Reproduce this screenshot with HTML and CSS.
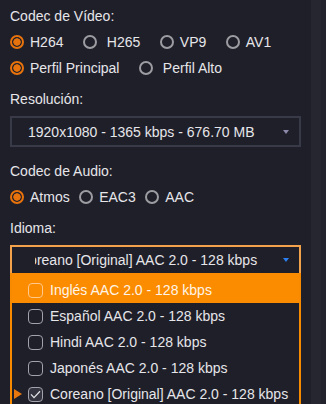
FILE: index.html
```html
<!DOCTYPE html>
<html lang="es">
<head>
    <meta charset="UTF-8">
    <meta name="viewport" content="width=device-width, initial-scale=1.0">
    <title>Opciones de descarga</title>

    <link rel="stylesheet" href="styles.css">
</head>
<body>
    <div id="page">
        <div id="panel">
            <div class="field-label">Codec de Vídeo:</div>
            <div class="radio-row wide">
                <label class="radio checked"><span class="mark"></span>H264</label>
                <label class="radio"><span class="mark"></span>&nbsp;H265</label>
                <label class="radio"><span class="mark"></span>VP9</label>
                <label class="radio"><span class="mark"></span>AV1</label>
            </div>
            <div class="radio-row wide flush">
                <label class="radio checked"><span class="mark"></span>Perfil Principal</label>
                <label class="radio"><span class="mark"></span>&nbsp;Perfil Alto</label>
            </div>

            <div class="field-label">Resolución:</div>
            <div class="select">
                <span class="value">1920x1080 - 1365 kbps - 676.70 MB</span>
                <span class="arrow"></span>
            </div>

            <div class="field-label">Codec de Audio:</div>
            <div class="radio-row">
                <label class="radio checked"><span class="mark"></span>Atmos</label>
                <label class="radio"><span class="mark"></span>EAC3</label>
                <label class="radio"><span class="mark"></span>AAC</label>
            </div>

            <div class="field-label">Idioma:</div>
            <div class="select open">
                <span class="value"><span class="scrolled">Coreano [Original] AAC 2.0 - 128 kbps</span></span>
                <span class="arrow"></span>
            </div>
            <ul class="options">
                <li class="hover"><span class="pointer"></span><span class="box"></span>Inglés AAC 2.0 - 128 kbps</li>
                <li><span class="pointer"></span><span class="box"></span>Español AAC 2.0 - 128 kbps</li>
                <li><span class="pointer"></span><span class="box"></span>Hindi AAC 2.0 - 128 kbps</li>
                <li><span class="pointer"></span><span class="box"></span>Japonés AAC 2.0 - 128 kbps</li>
                <li class="current">
                    <span class="pointer"></span>
                    <span class="box">
                        <svg width="11" height="9" viewBox="0 0 11 9"><path d="M1 4.4 L4 7.6 L10 1.2" fill="none" stroke="#e2e2e6" stroke-width="1.3"/></svg>
                    </span>Coreano [Original] AAC 2.0 - 128 kbps
                </li>
            </ul>
        </div>
        <div id="scroll-track"></div>
    </div>
</body>
</html>
```

FILE: styles.css
```css
body, html {
    padding: 0;
    margin: 0;
}

body {
    background-color: #1f1f29;
    color: #e6e6ea;
    font-family: "Liberation Sans", Arial, sans-serif;
    font-size: 14px;
}

#page {
    display: flex;
    height: 404px;
    overflow: hidden;
}

#panel {
    width: 311px;
    padding-top: 6px;
    padding-left: 10px;
    box-sizing: border-box;
}

#scroll-track {
    width: 10px;
    background-color: #252630;
    border-right: 5px solid #21222b;
}

.field-label {
    height: 20px;
    line-height: 20px;
    margin-top: 8px;
}

.field-label:first-child {
    margin-top: 0;
}

/* radio groups */
.radio-row {
    display: flex;
    align-items: center;
    height: 26px;
    margin-top: 3px;
    gap: 9.5px;
}

.radio-row.wide {
    gap: 19.5px;
}

.radio-row.flush {
    margin-top: 0;
}

.radio {
    display: flex;
    align-items: center;
    gap: 6px;
    white-space: nowrap;
}

.radio .mark {
    width: 14px;
    height: 14px;
    border: 2px solid #9c9ca2;
    border-radius: 50%;
    box-sizing: border-box;
}

.radio.checked .mark {
    border-color: #e8730c;
    background: radial-gradient(circle, #e8730c 0 3.4px, transparent 4px);
}

/* select boxes */
.select {
    display: flex;
    align-items: center;
    width: 291px;
    height: 31px;
    margin-top: 7px;
    margin-bottom: 14px;
    padding-left: 16px;
    padding-right: 10px;
    border: 2px solid #393a48;
    box-sizing: border-box;
}

.select .value {
    flex: 1;
    white-space: nowrap;
    overflow: hidden;
}

.select .arrow {
    width: 0;
    height: 0;
    border-left: 3.5px solid transparent;
    border-right: 3.5px solid transparent;
    border-top: 4px solid #8c89aa;
}

.select.open {
    height: 28px;
    margin-bottom: 0;
    padding-left: 23px;
    border-color: #f2a24a;
    border-bottom: none;
}

.select.open .scrolled {
    display: inline-block;
    margin-left: -16px;
}

.select.open .arrow {
    border-left-width: 3px;
    border-right-width: 3px;
    border-top-color: #2c7ff0;
}

/* dropdown list */
.options {
    list-style: none;
    margin: 0;
    padding: 0;
    width: 291px;
    border-left: 2px solid #f88a00;
    border-right: 2px solid #f88a00;
    box-sizing: border-box;
}

.options li {
    display: flex;
    align-items: center;
    height: 26px;
    padding-left: 2px;
    white-space: nowrap;
}

.options li:first-child {
    height: 30px;
    padding-top: 4px;
    box-sizing: border-box;
}

.options li.hover {
    background-color: #fb8c00;
    color: #fff4e8;
}

.options .pointer {
    width: 0;
    height: 0;
    margin-right: 6px;
    border-top: 5.5px solid transparent;
    border-bottom: 5.5px solid transparent;
    border-left: 8px solid transparent;
}

.options li.current .pointer {
    border-left-color: #e8780e;
}

.options .box {
    display: flex;
    align-items: center;
    justify-content: center;
    width: 15px;
    height: 15px;
    margin-right: 7px;
    border: 1.5px solid #a2a2ac;
    border-radius: 4px;
    box-sizing: border-box;
}

.options li.hover .box {
    border-color: #ffc88c;
}

.options li.current .box {
    background-color: #33343f;
}
```
